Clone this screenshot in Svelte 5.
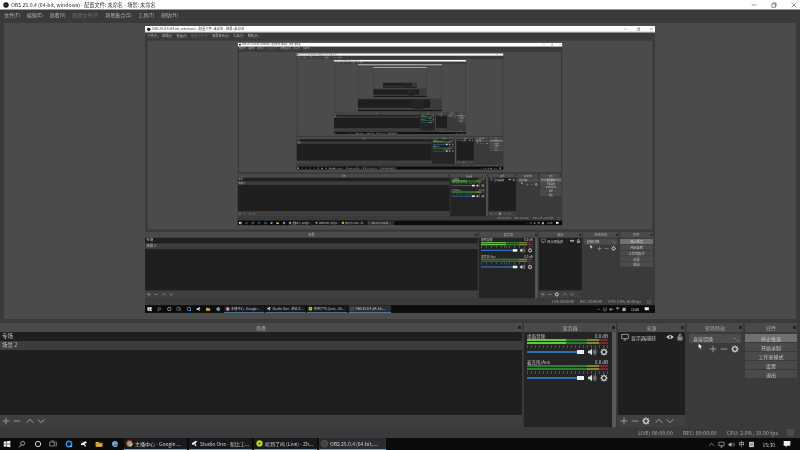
<script>
    // OBS previewing its own desktop, so the window is drawn inside itself
    const depth = 7;
    // below this level the copy is too small to hold readable text
    const textLevel = 3;
    const menus = ["文件(F)", "编辑(E)", "查看(V)", "配置文件(P)", "场景集合(S)", "工具(T)", "帮助(H)"];
    const controls = ["停止推流", "开始录制", "工作室模式", "设置", "退出"];
    const channels = [
        { name: "桌面音频", live: true },
        { name: "麦克风/Aux", live: false },
    ];
    const tasks = [
        { name: "主播中心 - Google ...", icon: "chrome" },
        { name: "Studio One - 新比工...", icon: "studio" },
        { name: "听到了吗 (Live) - Zh...", icon: "lime" },
        { name: "OBS 25.0.4 (64-bit, ...", icon: "obs" },
    ];
</script>

{#snippet gear()}
    <svg class="ico" viewBox="0 0 12 12">
        <circle cx="6" cy="6" r="3.4" fill="none" stroke="#ddd" stroke-width="1.7" />
        <path d="M6 .6v2M6 9.4v2M.6 6h2M9.4 6h2M2.2 2.2l1.4 1.4M8.4 8.4l1.4 1.4M9.8 2.2 8.4 3.6M3.6 8.4 2.2 9.8" stroke="#ddd" stroke-width="1.5" />
    </svg>
{/snippet}

{#snippet plus()}
    <svg class="ico" viewBox="0 0 12 12"><path d="M6 1v10M1 6h10" stroke="#aaa" stroke-width="1.2" /></svg>
{/snippet}

{#snippet minus()}
    <svg class="ico" viewBox="0 0 12 12"><path d="M1 6h10" stroke="#aaa" stroke-width="1.2" /></svg>
{/snippet}

{#snippet up()}
    <svg class="ico" viewBox="0 0 12 12"><path d="M1 8.5 6 3.5l5 5" fill="none" stroke="#bbb" stroke-width="1.2" /></svg>
{/snippet}

{#snippet down()}
    <svg class="ico" viewBox="0 0 12 12"><path d="M1 3.5l5 5 5-5" fill="none" stroke="#bbb" stroke-width="1.2" /></svg>
{/snippet}

{#snippet speaker()}
    <svg class="ico spk" viewBox="0 0 14 12">
        <path d="M1 4h2.5L7 1v10L3.500 8H1z" fill="#ddd" />
        <path d="M8.500 4a3 3 0 0 1 0 4M10 2.500a5.500 5.500 0 0 1 0 7M11.500 1a8 8 0 0 1 0 10" fill="none" stroke="#ccc" stroke-width=".9" />
    </svg>
{/snippet}

{#snippet dockHead(title)}
    <div class="head">
        <span>{title}</span>
        <i class="float"></i>
    </div>
{/snippet}

{#snippet taskIcon(kind)}
    <svg class="task-ico" viewBox="0 0 10 10">
        {#if kind === "chrome"}
            <circle cx="5" cy="5" r="4.500" fill="#d9473b" />
            <path d="M5 5 1 7.300A4.500 4.500 0 0 0 7 9z" fill="#3aa757" />
            <path d="M5 5h4.500A4.500 4.500 0 0 1 6 9.400z" fill="#f3c42f" />
            <circle cx="5" cy="5" r="2" fill="#4a8af4" stroke="#eee" stroke-width=".7" />
        {:else if kind === "studio"}
            <path d="M1 4.500 7 1l2 1-3 3 2 3-2 1-1-3-3 1z" fill="#e8e8e8" />
        {:else if kind === "lime"}
            <circle cx="5" cy="5" r="4.500" fill="#b4d621" />
            <circle cx="5" cy="5" r="1.600" fill="#4a6a10" />
        {:else}
            <circle cx="5" cy="5" r="4" fill="#222" stroke="#aaa" stroke-width=".8" />
            <circle cx="5" cy="5" r="1.500" fill="none" stroke="#aaa" stroke-width=".6" />
        {/if}
    </svg>
{/snippet}

{#snippet nested(level)}
    <div class="preview">
        {#if level > 0}
            <div class="frame">
                <div class="scaler">
                    {#if level > textLevel}
                        {@render screen(level - 1)}
                    {:else}
                        {@render tiny(level - 1)}
                    {/if}
                </div>
            </div>
        {/if}
    </div>
{/snippet}

<!-- text-free copy for the tip of the pyramid -->
{#snippet tiny(level)}
    <div class="screen">
        <div class="title"></div>
        <div class="menu"></div>
        {@render nested(level)}
        <div class="docks">
            <section class="dock"><div class="head"></div><div class="list"></div><div class="tools"></div></section>
            <section class="dock"><div class="head"></div><div class="mixer"></div></section>
            <section class="dock"><div class="head"></div><div class="list"></div><div class="tools"></div></section>
            <section class="dock plain"><div class="head"></div></section>
            <section class="dock plain"><div class="head"></div></section>
        </div>
        <div class="status"></div>
        <div class="taskbar"></div>
    </div>
{/snippet}

{#snippet screen(level)}
    <div class="screen">
        <div class="title">
            <svg class="logo" viewBox="0 0 10 10"><circle cx="5" cy="5" r="4.500" fill="#111" /><circle cx="5" cy="5" r="1.700" fill="none" stroke="#888" stroke-width=".6" /></svg>
            <span>OBS 25.0.4 (64-bit, windows) - 配置文件: 未命名 - 场景: 未命名</span>
            <div class="winbtns">
                <svg viewBox="0 0 10 10"><path d="M1 5h8" stroke="#555" /></svg>
                <svg viewBox="0 0 10 10"><path d="M1.500 3h6v6h-6zM3 3V1.500h5.500V7H7.500" fill="none" stroke="#555" /></svg>
                <svg viewBox="0 0 10 10"><path d="M1 1l8 8M9 1 1 9" stroke="#555" /></svg>
            </div>
        </div>

        <div class="menu">
            {#each menus as m, i}
                <span class:off={i === 3}>{m}</span>
            {/each}
        </div>

        {@render nested(level)}

        <div class="docks">
            <section class="dock">
                {@render dockHead("场景")}
                <div class="list">
                    <div class="row">专场</div>
                    <div class="row sel">场景 2</div>
                </div>
                <div class="tools">
                    {@render plus()}{@render minus()}<b></b>{@render up()}{@render down()}
                </div>
            </section>

            <section class="dock">
                {@render dockHead("混音器")}
                <div class="mixer">
                    <div class="channels">
                        {#each channels as c}
                            <div class="chan">
                                <div class="chan-top"><span>{c.name}</span><span>0.0 dB</span></div>
                                <div class="meter" class:live={c.live}>
                                    <i></i><i></i>
                                </div>
                                <div class="ticks"></div>
                                <div class="vol">
                                    <div class="slider"><i></i></div>
                                    {@render speaker()}
                                    {@render gear()}
                                </div>
                            </div>
                        {/each}
                    </div>
                    <div class="scroll"></div>
                </div>
            </section>

            <section class="dock">
                {@render dockHead("来源")}
                <div class="list">
                    <div class="source">
                        <svg class="ico" viewBox="0 0 12 12"><path d="M1 2h10v6.500H1zM4 10.500h4M6 8.500v2" fill="none" stroke="#ccc" /></svg>
                        <span>显示器捕获</span>
                        <svg class="ico" viewBox="0 0 12 12"><path d="M.5 6C3 2.500 9 2.500 11.500 6 9 9.500 3 9.500 .5 6z" fill="#ccc" /><circle cx="6" cy="6" r="1.500" fill="#222" /></svg>
                        <svg class="ico" viewBox="0 0 12 12"><path d="M2.500 5.500h7V11h-7zM4 5.500V3.500a2 2 0 0 1 4 0" fill="#888" stroke="#888" stroke-width=".7" /></svg>
                    </div>
                </div>
                <div class="tools">
                    {@render plus()}{@render minus()}{@render gear()}<b></b>{@render up()}{@render down()}
                </div>
            </section>

            <section class="dock plain">
                {@render dockHead("转场特效")}
                <div class="trans">
                    <div class="combo"><span>直接切换</span><em>⌃⌄</em></div>
                    <div class="trans-tools">
                        {@render plus()}{@render minus()}{@render gear()}
                    </div>
                    <svg class="cursor" viewBox="0 0 8 12"><path d="M.5.500v9l2.300-2 1.500 3.500 1.500-.7-1.500-3.300h3z" fill="#fff" stroke="#222" stroke-width=".5" /></svg>
                </div>
            </section>

            <section class="dock plain">
                {@render dockHead("控件")}
                <div class="controls">
                    {#each controls as c, i}
                        <div class="btn" class:on={i === 0}>{c}</div>
                    {/each}
                </div>
            </section>
        </div>

        <div class="status">
            <span>LIVE: 00:00:00</span>
            <span>REC: 00:00:00</span>
            <span>CPU: 2.0%, 30.00 fps</span>
            <i></i>
        </div>

        <div class="taskbar">
            <div class="sys">
                <svg viewBox="0 0 12 12"><path d="M1 2.500l4.300-.7v3.900H1zM6 1.700 11 1v4.700H6zM1 6.400h4.300v3.900L1 9.600zM6 6.400h5V11l-5-.7z" fill="#f2f2f2" /></svg>
                <svg viewBox="0 0 12 12"><circle cx="7" cy="5" r="3" fill="none" stroke="#ddd" /><path d="M5 7.500 1.500 11" stroke="#ddd" stroke-width="1.200" /></svg>
                <svg viewBox="0 0 12 12"><circle cx="6" cy="6" r="4" fill="none" stroke="#eee" stroke-width="1.300" /></svg>
                <svg viewBox="0 0 12 12"><path d="M1 3h7v6H1zM9.500 3H11v6H9.500M3 1.500h5" fill="none" stroke="#ddd" stroke-width=".8" /></svg>
                <svg viewBox="0 0 12 12"><circle cx="6" cy="6" r="4" fill="none" stroke="#2f8fe0" stroke-width="2.200" /><path d="M8 8l2.500 2.500" stroke="#fff" /></svg>
                <svg viewBox="0 0 12 12"><path d="M1 5.500 8 2l2.500 1.500L7 6.500 9.500 9 7.500 10 6 7.500 2 8z" fill="#eee" /></svg>
                <svg viewBox="0 0 12 12"><path d="M1 3h4l1 1.200h5V10H1z" fill="#e9b93f" /><path d="M1 6h10" stroke="#7a5f1d" /></svg>
                <svg viewBox="0 0 12 12"><circle cx="6" cy="6" r="4.500" fill="#2f7fd0" /><path d="M2 5h8M8 3C6 1 3 3 3 6s3 5 6 3" fill="none" stroke="#f3d76b" /></svg>
            </div>
            <div class="tasks">
                {#each tasks as t, i}
                    <div class="task" class:active={i === 3}>
                        {@render taskIcon(t.icon)}
                        <span>{t.name}</span>
                    </div>
                {/each}
            </div>
            <div class="tray">
                <svg viewBox="0 0 12 12"><path d="M2 8l4-4 4 4" fill="none" stroke="#ccc" /></svg>
                <svg viewBox="0 0 12 12"><path d="M1.500 2h9v6h-9zM4 10.500h4M6 8v2.500" fill="none" stroke="#ccc" /></svg>
                <svg viewBox="0 0 12 12"><path d="M1 4.500h2L6 2v8L3 7.500H1z" fill="#ccc" /><path d="M8 4a3 3 0 0 1 0 4M9.500 2.500a5 5 0 0 1 0 7" fill="none" stroke="#ccc" stroke-width=".8" /></svg>
                <span class="ime">中</span>
                <svg viewBox="0 0 12 12"><rect x="2" y="1.500" width="8" height="9" fill="#d5d5d5" /><path d="M3.500 4h5M3.500 6h5M3.500 8h5" stroke="#333" stroke-width=".7" /></svg>
                <span class="clock">15:30</span>
                <svg class="note" viewBox="0 0 12 12"><path d="M1 1.500h10v7H6.500L4 11V8.500H1z" fill="#eee" /></svg>
            </div>
        </div>
    </div>
{/snippet}

{@render screen(depth)}

<style>
    :global(body) {
        background: #000;
        overflow: hidden;
    }

    .screen {
        width: 800px;
        height: 450px;
        overflow: hidden;
        display: flex;
        flex-direction: column;
        background: #3a3a3a;
        color: #c4c4c4;
        font-family: "Noto Sans CJK SC", "Liberation Sans", sans-serif;
        font-size: 5px;
        line-height: 1;
        filter: blur(0.4px);
    }

    .title {
        height: 10px;
        flex: none;
        background: #fff;
        color: #333;
        display: flex;
        align-items: center;
        padding-left: 3px;
        gap: 2px;
        font-size: 5.2px;
        border-bottom: 1px solid #9a9a9a;
        box-sizing: border-box;
    }
    .logo {
        width: 6px;
        height: 6px;
    }
    .winbtns {
        margin-left: auto;
        display: flex;
        gap: 14px;
        padding-right: 3px;
    }
    .winbtns svg {
        width: 6px;
        height: 6px;
    }

    .menu {
        height: 13px;
        flex: none;
        display: flex;
        align-items: center;
        gap: 6.5px;
        padding: 0 4px 4px;
        box-sizing: border-box;
        font-size: 5px;
        color: #b4b4b4;
    }
    .menu .off {
        color: #6e6e6e;
    }

    .preview {
        height: 296px;
        flex: none;
        margin: 0 4px;
        padding-top: 3px;
        box-sizing: border-box;
        background: #4b4b4b;
        display: flex;
        justify-content: center;
    }
    .frame {
        width: 510px;
        height: 287px;
        overflow: hidden;
    }
    .scaler {
        width: 800px;
        height: 450px;
        transform: scale(0.6375);
        transform-origin: 0 0;
    }

    .docks {
        height: 104px;
        flex: none;
        margin: 4px 3px 1px 0;
        display: grid;
        grid-template-columns: 522px 92px 67px 56px 52px;
        gap: 2px;
    }
    .dock {
        display: flex;
        flex-direction: column;
        min-width: 0;
    }
    .head {
        height: 9px;
        flex: none;
        background: #4a4a4a;
        display: flex;
        align-items: center;
        justify-content: center;
        position: relative;
        color: #aaa;
    }
    .float {
        position: absolute;
        right: 1px;
        top: 3px;
        width: 3px;
        height: 3px;
        background: #222;
    }
    .list {
        flex: 1;
        background: #1f1f1f;
    }
    .row {
        height: 9px;
        display: flex;
        align-items: center;
        padding-left: 2px;
        font-size: 5.5px;
        color: #c0c0c0;
    }
    .row.sel {
        background: #3c3c3c;
    }
    .tools {
        height: 12px;
        flex: none;
        background: #3f3f3f;
        display: flex;
        align-items: center;
        padding-left: 2px;
        gap: 3px;
    }
    .tools b {
        margin-left: -1px;
    }
    .ico {
        width: 8px;
        height: 8px;
        flex: none;
    }

    .mixer {
        flex: 1;
        display: flex;
        gap: 2px;
        background: #242424;
    }
    .channels {
        flex: 1;
        padding: 1px 2px 0 3px;
        min-width: 0;
    }
    .chan {
        height: 26px;
    }
    .chan-top {
        display: flex;
        justify-content: space-between;
        height: 6px;
        align-items: center;
        font-size: 4.5px;
    }
    .meter {
        height: 5px;
        display: flex;
        flex-direction: column;
        gap: 1px;
    }
    .meter i {
        flex: 1;
        background: linear-gradient(to right, #327a32 0 74%, #85853a 74% 89%, #742c2c 89%);
    }
    .meter.live i {
        background: linear-gradient(to right, #5fc943 0 48%, #327a32 48% 74%, #85853a 74% 89%, #742c2c 89%);
    }
    .ticks {
        height: 3px;
        margin-top: 1px;
        background: repeating-linear-gradient(to right, #999 0 1px, transparent 1px 4px);
        opacity: 0.4;
    }
    .vol {
        display: flex;
        align-items: center;
        height: 8px;
        gap: 3px;
    }
    .slider {
        flex: 1;
        height: 2px;
        background: #2f6fb8;
        position: relative;
    }
    .slider i {
        position: absolute;
        right: 0;
        top: -1px;
        width: 7px;
        height: 4px;
        background: #eee;
    }
    .spk {
        width: 10px;
    }
    .scroll {
        width: 4px;
        flex: none;
        background: #5a5a5a;
    }

    .source {
        display: flex;
        align-items: center;
        height: 10px;
        padding: 0 1px 0 3px;
        gap: 2px;
    }
    .source span {
        flex: 1;
        white-space: nowrap;
    }

    .plain {
        background: #3a3a3a;
    }
    .trans {
        padding: 2px;
        position: relative;
    }
    .combo {
        height: 9px;
        background: #4c4c4c;
        display: flex;
        align-items: center;
        justify-content: space-between;
        padding: 0 2px 0 4px;
    }
    .combo em {
        font-style: normal;
        font-size: 4px;
    }
    .trans-tools {
        display: flex;
        justify-content: flex-end;
        gap: 3px;
        padding: 2px 2px 0 0;
    }
    .cursor {
        position: absolute;
        left: 11px;
        top: 11px;
        width: 5px;
        height: 7px;
    }
    .controls {
        display: flex;
        flex-direction: column;
        gap: 1px;
        padding-top: 2px;
    }
    .btn {
        height: 8px;
        background: #4a4a4a;
        display: flex;
        align-items: center;
        justify-content: center;
    }
    .btn.on {
        background: #707070;
    }

    .status {
        height: 9px;
        flex: none;
        margin-bottom: 1px;
        display: flex;
        align-items: center;
        justify-content: flex-end;
        gap: 10px;
        padding-right: 6px;
        font-size: 5px;
        letter-spacing: 0.2px;
        color: #a8a8a8;
    }
    .status i {
        width: 7px;
        height: 7px;
        background: #4c4c4c;
        margin-left: -1px;
    }

    .taskbar {
        height: 12px;
        flex: none;
        background: #0b0b0c;
        display: flex;
        align-items: stretch;
        color: #d0d0d0;
    }
    .sys {
        width: 124px;
        flex: none;
        box-sizing: border-box;
        padding-left: 3px;
        display: flex;
        align-items: center;
        gap: 7.4px;
    }
    .sys svg {
        width: 8px;
        height: 8px;
        flex: none;
    }
    .tasks {
        display: flex;
        gap: 2px;
    }
    .task {
        width: 63px;
        box-sizing: border-box;
        padding-left: 2px;
        display: flex;
        align-items: center;
        gap: 2px;
        white-space: nowrap;
        overflow: hidden;
        border-bottom: 1px solid #6fa6cf;
        background: #17191c;
    }
    .task.active {
        width: 67px;
        background: #2b2d30;
    }
    .task-ico {
        width: 7px;
        height: 7px;
        flex: none;
    }
    .tray {
        margin-left: auto;
        display: flex;
        align-items: center;
        gap: 3px;
        padding-right: 9px;
    }
    .tray svg {
        width: 7px;
        height: 7px;
    }
    .ime {
        font-size: 6px;
    }
    .clock {
        margin: 0 5px;
    }
    .tray .note {
        width: 8px;
        height: 8px;
    }
</style>
